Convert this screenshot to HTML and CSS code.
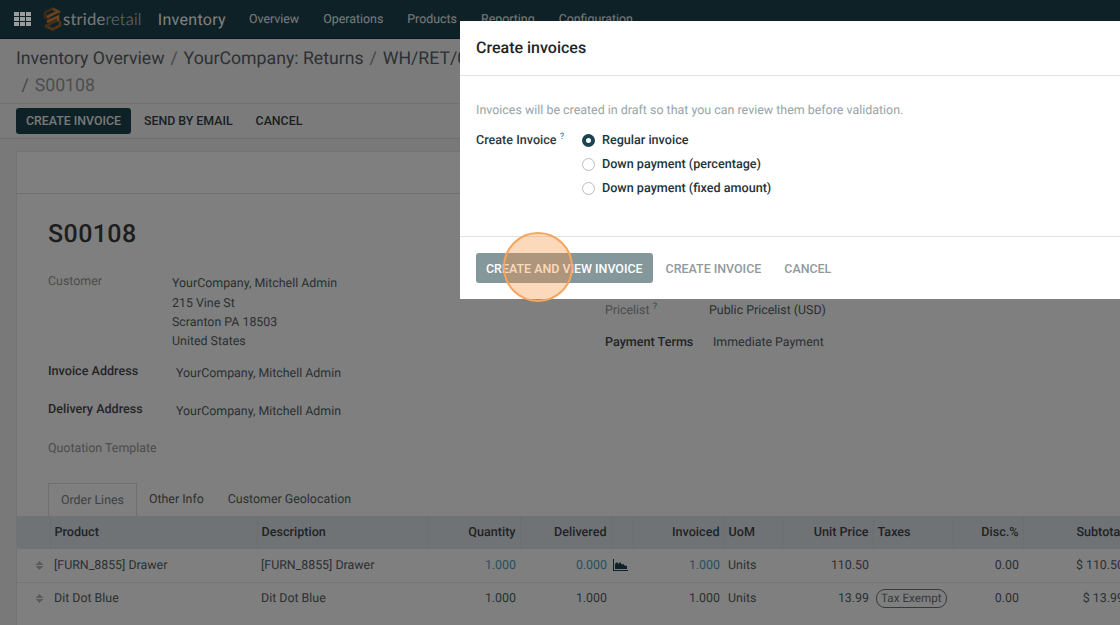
FILE: index.html
```html
<!DOCTYPE html>
<html lang="en">

<head>
    <meta charset="UTF-8">
    <meta name="viewport" content="width=device-width, initial-scale=1.0">
    <title>Create invoices</title>
    <link rel="stylesheet" href="styles.css">
</head>

<body>
    <nav class="navbar">
        <svg class="apps" width="17" height="14" viewBox="0 0 17 14">
            <path d="M0 0h5v4H0zM6 0h5v4H6zM12 0h5v4h-5zM0 5h5v4H0zM6 5h5v4H6zM12 5h5v4h-5zM0 10h5v4H0zM6 10h5v4H6zM12 10h5v4h-5z" />
        </svg>
        <div class="logo">
            <svg width="19" height="24" viewBox="0 0 19 24" fill="none" stroke-width="2.600">
                <path d="M9.500 1.500 2 5.500v4.500l5 2.500" stroke="#7a5230" />
                <path d="M9.500 1.500 17 5.500" stroke="#c47a35" />
                <path d="M4 10 15 4.500M4 15l11-5.500v5" stroke="#d9863a" />
                <path d="M17 14v4.500l-7.500 4-7.500-4" stroke="#a5652e" />
                <path d="M3 19l11-5.500" stroke="#8a5a30" />
            </svg>
            <span class="logo-text"><b>stride</b>retail</span>
        </div>
        <span class="app-name">Inventory</span>
        <a class="nav-link">Overview</a>
        <a class="nav-link">Operations</a>
        <a class="nav-link">Products</a>
        <a class="nav-link">Reporting</a>
        <a class="nav-link">Configuration</a>
    </nav>

    <div class="control-panel">
        <div class="breadcrumb">
            <div><a>Inventory Overview</a> <i>/</i> <a>YourCompany: Returns</a> <i>/</i> <a>WH/RET/00012</a></div>
            <div class="crumb-last"><i>/</i> S00108</div>
        </div>
        <div class="actions">
            <button type="button" class="btn btn-dark">CREATE INVOICE</button>
            <button type="button" class="btn">SEND BY EMAIL</button>
            <button type="button" class="btn">CANCEL</button>
        </div>
    </div>

    <div class="content">
        <div class="sheet">
            <div class="sheet-head"></div>
            <div class="sheet-body">
                <h1>S00108</h1>
                <div class="form-cols">
                    <div class="form-left">
                        <div class="field field-customer">
                            <label class="muted">Customer</label>
                            <div class="address">
                                <div class="address-first">YourCompany, Mitchell Admin</div>
                                <div>215 Vine St</div>
                                <div>Scranton PA 18503</div>
                                <div>United States</div>
                            </div>
                        </div>
                        <div class="field field-line">
                            <label>Invoice Address</label>
                            <span class="val">YourCompany, Mitchell Admin</span>
                        </div>
                        <div class="field field-line">
                            <label>Delivery Address</label>
                            <span class="val">YourCompany, Mitchell Admin</span>
                        </div>
                        <div class="field field-line field-template">
                            <label class="muted">Quotation Template</label>
                        </div>
                    </div>
                    <div class="form-right">
                        <div class="field-r">
                            <label class="muted">Pricelist <sup>?</sup></label>
                            <span>Public Pricelist (USD)</span>
                        </div>
                        <div class="field-r field-terms">
                            <label>Payment Terms</label>
                            <span>Immediate Payment</span>
                        </div>
                    </div>
                </div>
                <div class="tabs">
                    <a class="tab active">Order Lines</a>
                    <a class="tab">Other Info</a>
                    <a class="tab">Customer Geolocation</a>
                </div>
            </div>

            <table class="lines">
                <colgroup>
                    <col style="width: 33px">
                    <col style="width: 207px">
                    <col style="width: 171px">
                    <col style="width: 92px">
                    <col style="width: 91px">
                    <col style="width: 22px">
                    <col style="width: 91px">
                    <col style="width: 58px">
                    <col style="width: 91px">
                    <col style="width: 80px">
                    <col style="width: 70px">
                    <col style="width: 105px">
                </colgroup>
                <thead>
                    <tr>
                        <th></th>
                        <th>Product</th>
                        <th>Description</th>
                        <th class="num">Quantity</th>
                        <th class="num">Delivered</th>
                        <th></th>
                        <th class="num">Invoiced</th>
                        <th>UoM</th>
                        <th class="num">Unit Price</th>
                        <th>Taxes</th>
                        <th class="num">Disc.%</th>
                        <th class="num">Subtotal</th>
                    </tr>
                </thead>
                <tbody>
                    <tr>
                        <td class="drag"><span class="handle"></span></td>
                        <td>[FURN_8855] Drawer</td>
                        <td>[FURN_8855] Drawer</td>
                        <td class="num link">1.000</td>
                        <td class="num link">0.000</td>
                        <td class="chart">
                            <svg width="15" height="12" viewBox="0 0 15 12">
                                <path d="M0 0h1v11h14v1H0z" />
                                <path d="M2 10V5l2-2 1.500 2L7 3l2 2.500 1.500-.5 1 1.500L14 7v3z" />
                            </svg>
                        </td>
                        <td class="num link">1.000</td>
                        <td>Units</td>
                        <td class="num">110.50</td>
                        <td></td>
                        <td class="num">0.00</td>
                        <td class="num">$ 110.50</td>
                    </tr>
                    <tr>
                        <td class="drag"><span class="handle"></span></td>
                        <td>Dit Dot Blue</td>
                        <td>Dit Dot Blue</td>
                        <td class="num">1.000</td>
                        <td class="num">1.000</td>
                        <td></td>
                        <td class="num">1.000</td>
                        <td>Units</td>
                        <td class="num">13.99</td>
                        <td><span class="tax-pill">Tax Exempt</span></td>
                        <td class="num">0.00</td>
                        <td class="num">$ 13.99</td>
                    </tr>
                </tbody>
            </table>
        </div>
    </div>

    <div class="backdrop"></div>

    <div class="modal">
        <header class="modal-head">Create invoices</header>
        <div class="modal-body">
            <p class="hint">Invoices will be created in draft so that you can review them before validation.</p>
            <div class="modal-field">
                <div class="modal-label">Create Invoice <sup>?</sup></div>
                <div class="radios">
                    <label class="radio"><input type="radio" name="method" checked> Regular invoice</label>
                    <label class="radio"><input type="radio" name="method"> Down payment (percentage)</label>
                    <label class="radio"><input type="radio" name="method"> Down payment (fixed amount)</label>
                </div>
            </div>
        </div>
        <footer class="modal-foot">
            <button type="button" class="btn btn-main">CREATE AND VIEW INVOICE</button>
            <button type="button" class="btn btn-soft">CREATE INVOICE</button>
            <button type="button" class="btn btn-soft">CANCEL</button>
        </footer>
    </div>

    <div class="click-mark"></div>
</body>

</html>
```

FILE: styles.css
```css
* {
    box-sizing: border-box;
}

html,
body {
    margin: 0;
    padding: 0;
    height: 100%;
    overflow: hidden;
}

body {
    width: 1120px;
    height: 625px;
    position: relative;
    background-color: #f2f2f2;
    font-family: Roboto, "Liberation Sans", sans-serif;
    font-size: 12.4px;
    text-rendering: geometricPrecision;
    color: #555f66;
}

sup {
    font-size: 9px;
    line-height: 0;
    color: #3b8fa3;
}

/* navbar */
.navbar {
    height: 39px;
    background-color: #1a434f;
    border-bottom: 1px solid #123039;
    display: flex;
    align-items: center;
    white-space: nowrap;
    color: #ffffff;
}

.apps {
    margin-left: 14px;
    flex: none;
    fill: #9c9c9c;
    position: relative;
    z-index: 1;
}

.logo {
    display: flex;
    align-items: center;
    margin-left: 12px;
}

.logo-text {
    margin-left: 1px;
    font-family: Lato, sans-serif;
    font-size: 16.6px;
    font-weight: 300;
    letter-spacing: 0.2px;
    color: #e4e4e4;
}

.logo-text b {
    font-weight: 400;
    color: #f0f0f0;
}

.app-name {
    margin-left: 16px;
    margin-right: 11px;
    font-size: 16px;
    letter-spacing: 0.3px;
}

.nav-link {
    padding: 0 12px;
    color: #f2f2f2;
}

/* control panel */
.control-panel {
    background-color: #f7f7f7;
    border-bottom: 1px solid #dcdcdc;
    height: 100px;
    padding-left: 16px;
}

.breadcrumb {
    font-size: 17.7px;
    line-height: 27px;
    height: 65px;
    padding-top: 7px;
    white-space: nowrap;
    color: #5a6268;
    border-bottom: 1px solid #e2e2e2;
    margin-left: -16px;
    padding-left: 16px;
}

.breadcrumb i {
    font-style: normal;
    margin: 0 1.500px;
    color: #8c8c8c;
}

.crumb-last {
    padding-left: 4px;
    color: #9a9a9a;
}

.actions {
    display: flex;
    align-items: center;
    height: 34px;
}

.btn {
    border: none;
    background: none;
    font-family: inherit;
    font-size: 12.450px;
    font-weight: 500;
    height: 26px;
    padding: 0 10px;
    margin-right: 3px;
    color: #333f46;
    border-radius: 3px;
}

.actions .btn {
    font-size: 12.350px;
}

.btn-dark {
    background-color: #1a434f;
    color: #f0f0f0;
}

/* sheet */
.content {
    padding: 12px 0 0 16px;
}

.sheet {
    width: 1200px;
    min-height: 474px;
    background-color: #ffffff;
    border: 1px solid #e6e6e6;
    border-bottom: none;
}

.sheet-head {
    height: 42px;
    border-bottom: 1px solid #e2e2e2;
}

.sheet-body {
    padding: 0 31px;
}

h1 {
    margin: 0;
    padding-top: 25px;
    font-size: 25px;
    line-height: 32px;
    font-weight: 500;
    letter-spacing: 0.4px;
    color: #3d3d3d;
}

.form-cols {
    display: flex;
    height: 232px;
    padding-top: 22px;
}

.form-left {
    width: 557px;
    flex: none;
}

.field {
    display: flex;
}

.field label {
    width: 124px;
    font-size: 12.600px;
    font-weight: 500;
    color: #444a4e;
}

.field label.muted,
.field-r label.muted {
    font-size: 12.400px;
    font-weight: 400;
    color: #989898;
}

.field-customer label {
    line-height: 17px;
}

.address {
    padding-top: 1px;
    line-height: 19px;
}

.address-first {
    margin-bottom: 1px;
}

.field-customer {
    height: 81px;
}

.field-line {
    height: 38px;
    padding-top: 9px;
}

.field-line label {
    line-height: 17px;
}

.field-template {
    margin-top: 1px;
}

.val {
    padding: 1px 0 0 4px;
    line-height: 19px;
}

.form-right {
    padding-top: 27px;
}

.field-r {
    display: flex;
    align-items: center;
    height: 20px;
}

.field-r label {
    width: 104px;
    font-size: 12.600px;
    font-weight: 500;
    color: #444a4e;
}

.field-terms {
    margin-top: 12px;
}

.field-terms label {
    width: 108px;
}

.tabs {
    display: flex;
    height: 33px;
}

.tab {
    padding: 0 12px;
    line-height: 33px;
    color: #555f66;
}

.tab.active {
    background-color: #ffffff;
    border: 1px solid #dedede;
    border-bottom: none;
    color: #7d8387;
}

/* order lines */
.lines {
    border-collapse: collapse;
    table-layout: fixed;
    width: 1111px;
    white-space: nowrap;
}

.lines th {
    height: 33px;
    padding: 0 4px;
    text-align: left;
    font-size: 12.600px;
    font-weight: 500;
    color: #3f474d;
    background-color: #e1e6ea;
    border-right: 1px solid #d9dee2;
}

.lines td {
    height: 33px;
    padding: 0 4px;
}

.lines tbody tr + tr td {
    height: 32px;
    border-top: 1px solid #eaeaea;
}

.lines .num {
    text-align: right;
}

.lines .link {
    color: #4f9fbd;
}

.drag {
    text-align: right;
}

.handle {
    display: inline-block;
    width: 7px;
    height: 11px;
    margin-right: 3px;
    vertical-align: middle;
    background:
        linear-gradient(to top left, #b8b8b8 50%, transparent 51%) 0 0 / 4px 5px no-repeat,
        linear-gradient(to top right, #b8b8b8 50%, transparent 51%) 3px 0 / 4px 5px no-repeat,
        linear-gradient(to bottom left, #b8b8b8 50%, transparent 51%) 0 6px / 4px 5px no-repeat,
        linear-gradient(to bottom right, #b8b8b8 50%, transparent 51%) 3px 6px / 4px 5px no-repeat;
}

.lines td.chart {
    padding: 0 0 0 2px;
    overflow: visible;
}

.chart svg {
    fill: #1a434f;
    display: block;
}

.tax-pill {
    display: inline-block;
    margin-left: -1px;
    padding: 0 4px;
    border: 1px solid #6c7479;
    border-radius: 9px;
    font-size: 11.7px;
    line-height: 17px;
    color: #6c7479;
}

/* dialog */
.backdrop {
    position: fixed;
    inset: 0;
    background-color: rgba(0, 0, 0, 0.5);
}

.modal {
    position: absolute;
    left: 460px;
    top: 21px;
    width: 700px;
    height: 278px;
    display: flex;
    flex-direction: column;
    background-color: #ffffff;
}

.modal-head {
    height: 55px;
    padding: 0 16px;
    border-bottom: 1px solid #dee2e6;
    font-size: 16px;
    font-weight: 500;
    line-height: 53px;
    color: #212529;
}

.modal-body {
    flex: 1;
    padding: 0 16px;
    border-bottom: 1px solid #dee2e6;
}

.hint {
    margin: 27px 0 0;
    font-size: 12.450px;
    line-height: 16px;
    color: #98a4a8;
}

.modal-field {
    display: flex;
    margin-top: 9px;
}

.modal-label {
    width: 106px;
    padding-top: 1px;
    line-height: 24px;
    font-size: 12.600px;
    font-weight: 500;
    color: #2b3a40;
}

.radio {
    display: flex;
    align-items: center;
    height: 24px;
    font-size: 12.600px;
    font-weight: 500;
    color: #22353c;
}

.radio input {
    appearance: none;
    width: 13px;
    height: 13px;
    margin: 0 7px 0 0;
    border: 1px solid #b6bcbe;
    border-radius: 50%;
    background-color: #ffffff;
}

.radio input:checked {
    border: 4px solid #1a434f;
}

.modal-foot {
    height: 62px;
    flex: none;
    display: flex;
    align-items: center;
    padding: 0 16px;
}

.btn-main {
    height: 30px;
    background-color: #84979b;
    color: #ffffff;
}

.btn-soft {
    color: #8f9a9d;
}

.click-mark {
    position: absolute;
    left: 503px;
    top: 232px;
    width: 70px;
    height: 70px;
    border: 2.500px solid #f4a65f;
    border-radius: 50%;
    background-color: rgba(250, 150, 70, 0.36);
}
```
